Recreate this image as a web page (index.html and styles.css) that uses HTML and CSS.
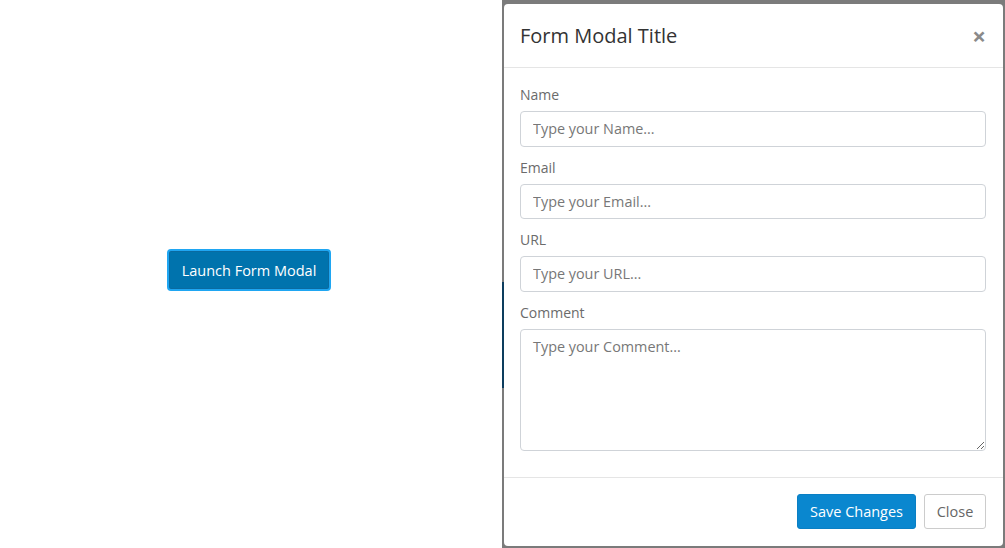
FILE: index.html
```html
<!DOCTYPE html>
<html>
<head>
<meta charset="utf-8">
<link rel="stylesheet" href="styles.css">
</head>
<body>
<div class="page">
  <div class="stage">
    <button class="launch">Launch Form Modal</button>
  </div>
  <div class="backdrop">
    <div class="peek"></div>
    <div class="modal">
      <div class="modal-header">
        <h2 class="modal-title">Form Modal Title</h2>
        <span class="close-x">&times;</span>
      </div>
      <div class="modal-body">
        <label class="field-label">Name</label>
        <input class="field" type="text" placeholder="Type your Name...">
        <label class="field-label">Email</label>
        <input class="field" type="text" placeholder="Type your Email...">
        <label class="field-label">URL</label>
        <input class="field" type="text" placeholder="Type your URL...">
        <label class="field-label">Comment</label>
        <textarea class="field area" placeholder="Type your Comment..."></textarea>
      </div>
      <div class="modal-footer">
        <button class="btn btn-primary">Save Changes</button>
        <button class="btn btn-default">Close</button>
      </div>
    </div>
  </div>
</div>
</body>
</html>
```
FILE: styles.css
```css
* { box-sizing: border-box; }
html, body { margin: 0; padding: 0; background: #fff; }
body { font-family: "Open Sans", "Liberation Sans", sans-serif; font-size: 14px; color: #555; }
.page { display: flex; width: 1005px; height: 548px; overflow: hidden; }
.stage { width: 502px; display: flex; align-items: center; justify-content: center; padding: 0 4px 8px 0; }
.launch {
  font-family: inherit; font-size: 14.5px; color: #fff;
  background: #0073ad; border: 2px solid #1fa6f2; border-radius: 4px;
  height: 42px; width: 164px; padding: 0; cursor: pointer;
  box-shadow: inset 0 0 0 1px #0a6aa0;
}
.backdrop {
  position: relative; flex: 1; background: #7b7b7b;
  padding: 4px 2px 2px 2px; display: flex;
}
.peek { position: absolute; left: 0; top: 282px; width: 2px; height: 106px; background: #0d3d5e; }
.modal {
  position: relative; flex: 1; background: #fff; border-radius: 4px;
  display: flex; flex-direction: column;
}
.modal-header {
  height: 64px; border-bottom: 1px solid #e5e5e5;
  display: flex; align-items: center; justify-content: space-between;
  padding: 0 17px 1px 16px;
}
.modal-title { margin: 0; font-size: 20px; font-weight: 400; color: #333; }
.close-x { font-size: 24px; font-weight: 700; color: #8a8a8a; line-height: 1; margin-top: 1px; }
.modal-body { padding: 17px 17px 0 16px; display: flex; flex-direction: column; height: 409px; }
.field-label { display: block; line-height: 20px; color: #6b6b6b; margin-bottom: 6px; }
.field {
  font-family: inherit; font-size: 14.4px; color: #555;
  height: 35.6px; border: 1px solid #cfd3d8; border-radius: 4px;
  padding: 0 12px; margin: 0 0 11px 0; width: 100%; outline: none;
}
.field::placeholder { color: #777; }
.area { height: 122px; padding: 7px 12px; resize: vertical; }
.modal-footer {
  border-top: 1px solid #e5e5e5; flex: 1;
  display: flex; justify-content: flex-end; align-items: flex-start;
  padding: 16px 17px 0 0; gap: 8px;
}
.btn { font-family: inherit; font-size: 14.5px; height: 35px; border-radius: 3px; padding: 0; cursor: pointer; }
.btn-primary { background: #0a87cf; color: #fff; border: 1px solid #0a7fc4; width: 119px; }
.btn-default { background: #fff; color: #666; border: 1px solid #ccc; width: 62px; }
```
